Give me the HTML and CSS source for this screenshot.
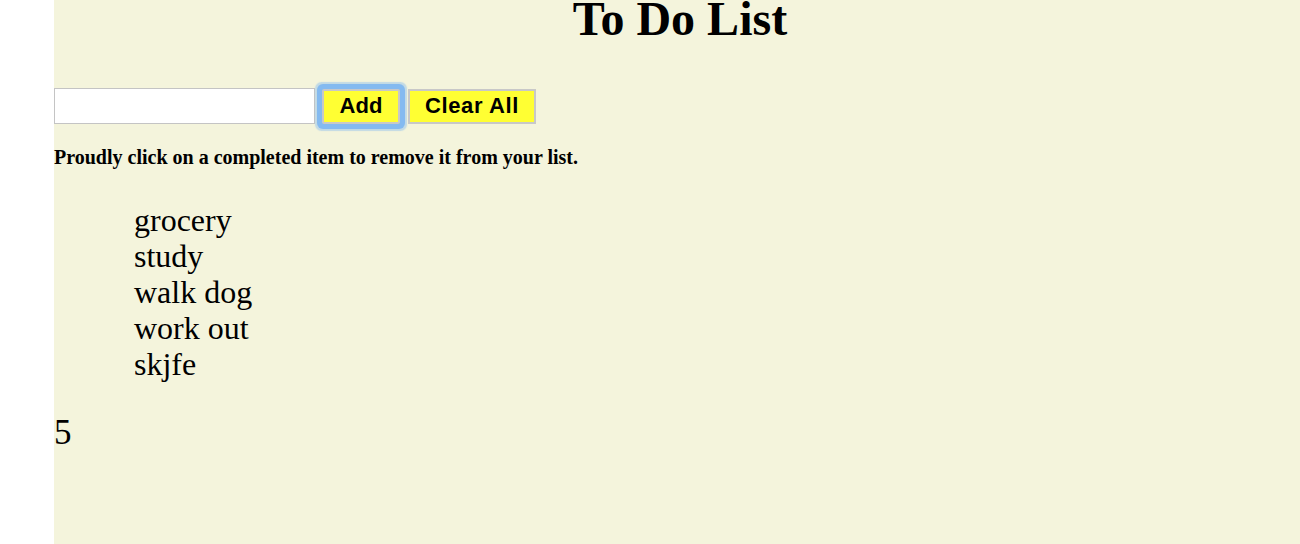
FILE: index.html
```html
<!DOCTYPE html>
<html>
<head>
<meta charset="utf-8">
<link rel="stylesheet" href="styles.css">
</head>
<body>
<div class="page">
  <h1 class="title">To Do List</h1>
  <div class="controls">
    <input class="item-input" type="text">
    <button class="btn btn-add">Add</button>
    <button class="btn btn-clear">Clear All</button>
  </div>
  <p class="hint">Proudly click on a completed item to remove it from your list.</p>
  <ul class="list">
    <li>grocery</li>
    <li>study</li>
    <li>walk dog</li>
    <li>work out</li>
    <li>skjfe</li>
  </ul>
  <div class="count">5</div>
</div>
</body>
</html>
```
FILE: styles.css
```css
html, body {
  margin: 0;
  padding: 0;
  overflow: hidden;
  background: #ffffff;
}
.page {
  margin-left: 54px;
  width: 1252px;
  min-height: 544px;
  background: #f4f4dc;
  font-family: "Liberation Serif", "Times New Roman", serif;
  color: #000;
  padding-top: 1px;
  box-sizing: border-box;
}
.title {
  margin: -10px 0 0;
  font-size: 48px;
  font-weight: bold;
  text-align: center;
}
.controls {
  display: flex;
  align-items: center;
  margin-top: 42px;
}
.item-input {
  width: 261px;
  height: 36px;
  box-sizing: border-box;
  border: 1px solid #c4c4c4;
  background: #fff;
  margin: 0;
  padding: 2px 4px;
}
.btn {
  font-family: "Liberation Sans", Arial, sans-serif;
  font-weight: bold;
  font-size: 22px;
  color: #000;
  background: #ffff33;
  border: 2px solid #c8c8c8;
  height: 35px;
  box-sizing: border-box;
  padding: 0;
  margin: 0;
}
.btn-add {
  width: 78px;
  margin-left: 7px;
  box-shadow: 0 0 0 5px #84baf0, 0 0 1px 7px rgba(132, 186, 240, 0.45);
  border-radius: 2px;
}
.btn-clear {
  width: 128px;
  margin-left: 8px;
  letter-spacing: 0.6px;
}
.hint {
  font-size: 20px;
  font-weight: bold;
  margin: 22px 0 0;
}
.list {
  font-size: 32px;
  line-height: 36px;
  margin: 33px 0 31px;
  padding-left: 80px;
  list-style: none;
}
.count {
  font-size: 35px;
}
```
